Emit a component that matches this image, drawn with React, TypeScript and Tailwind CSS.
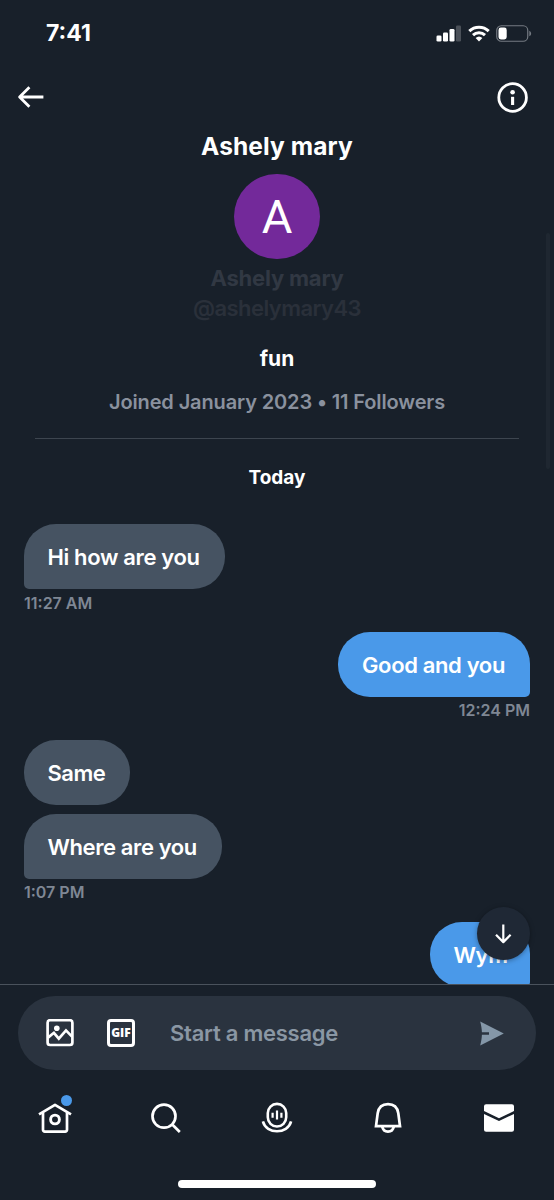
import React from "react";

function SignalIcon() {
  return (
    <svg width="26" height="17" viewBox="0 0 26 17" fill="#fff">
      <rect x="0.5" y="10.5" width="5" height="6" rx="1.3" />
      <rect x="7" y="7.5" width="5" height="9" rx="1.3" />
      <rect x="13.5" y="4" width="5" height="12.5" rx="1.3" />
      <rect x="20" y="0.5" width="5" height="16" rx="1.3" fill="#4a5058" />
    </svg>
  );
}

function WifiIcon() {
  return (
    <svg width="22" height="17" viewBox="0 0 22 17" fill="none" stroke="#fff" strokeWidth="3">
      <path d="M1.3 6.1a14 14 0 0 1 19.4 0" />
      <path d="M5 10.1a8.7 8.7 0 0 1 12 0" />
      <path d="M7.6 13L11 16.5L14.4 13a5 5 0 0 0-6.8 0Z" fill="#fff" stroke="none" />
    </svg>
  );
}

function BatteryIcon() {
  return (
    <svg width="36" height="17" viewBox="0 0 36 17" fill="none">
      <rect x="0.75" y="0.75" width="31" height="15.5" rx="4.6" stroke="#747a82" strokeWidth="1.2" />
      <path d="M33.3 5.7c2.4 1 2.4 4.6 0 5.6Z" fill="#747a82" />
      <rect x="2.5" y="2.6" width="8.2" height="11.8" rx="2.4" fill="#fff" />
    </svg>
  );
}

function BackIcon() {
  return (
    <svg width="27" height="22" viewBox="0 0 27 22" fill="none" stroke="#fff" strokeWidth="2.8">
      <path d="M2.4 11H26.4M12.4 1.2L2.6 11L12.4 20.8" strokeLinejoin="round" />
    </svg>
  );
}

function InfoIcon() {
  return (
    <svg width="32" height="32" viewBox="0 0 32 32" fill="none">
      <circle cx="15.6" cy="16.5" r="13.8" stroke="#fff" strokeWidth="2.8" />
      <circle cx="15.6" cy="11.3" r="2.3" fill="#fff" />
      <path d="M15.6 15.8v8.2" stroke="#fff" strokeWidth="3.1" />
    </svg>
  );
}

function PhotoIcon() {
  return (
    <svg width="28" height="28" viewBox="0 0 28 28" fill="none" stroke="#fff" strokeWidth="2.7">
      <rect x="1.6" y="1.2" width="24.8" height="24.8" rx="2.5" />
      <path d="M2 18.6L7.9 13.8L12.8 19.6L20 11.4L26 17.6" />
      <circle cx="10.8" cy="9.3" r="2.8" fill="#fff" stroke="none" />
    </svg>
  );
}

function GifIcon() {
  return (
    <div className="flex h-7 w-7 items-center justify-center rounded-[4px] border-[3px] border-white font-['Open_Sans','Inter',sans-serif] text-[12px] leading-none font-extrabold text-white">
      GIF
    </div>
  );
}

function SendIcon() {
  return (
    <svg width="24" height="25" viewBox="0 0 24 25">
      <path d="M0.2 0.4L23.8 12.5L0.2 24.6C1.4 19.8 1.8 16.8 1.9 13.7H9V11.3H1.9C1.8 8.2 1.4 5.2 0.2 0.4Z" fill="#8497a8" />
    </svg>
  );
}

function HomeIcon() {
  return (
    <svg width="34" height="32" viewBox="0 0 34 32" fill="none" stroke="#fff" strokeWidth="2.7">
      <path d="M1 12.3L17 2.8L33 12.3" strokeLinejoin="round" />
      <path d="M5 10.5V27.8a1.8 1.8 0 0 0 1.8 1.8H27.2a1.8 1.8 0 0 0 1.8-1.8V10.5" />
      <circle cx="17" cy="17.5" r="4.4" strokeWidth="2.9" />
    </svg>
  );
}

function SearchIcon() {
  return (
    <svg width="32" height="32" viewBox="0 0 32 32" fill="none" stroke="#fff" strokeWidth="2.7">
      <circle cx="14" cy="14.2" r="11.5" />
      <path d="M22 22.2L29.8 30" />
    </svg>
  );
}

function MicIcon() {
  return (
    <svg width="32" height="32" viewBox="0 0 32 32" fill="none" stroke="#fff" strokeWidth="2.6">
      <rect x="6.8" y="1.9" width="18.4" height="22.6" rx="9.2" />
      <path d="M1.9 19.4c3.3 13.2 24.9 13.2 28.2 0" />
      <path d="M11.6 10.7v5M16 8.6v9M20.4 10.7v5" strokeWidth="2.2" />
    </svg>
  );
}

function BellIcon() {
  return (
    <svg width="30" height="32" viewBox="0 0 30 32" fill="none" stroke="#fff" strokeWidth="2.7">
      <path d="M3 24.1L4.7 11.3C5.6 5.4 9.4 2.2 15 2.2S24.4 5.4 25.3 11.3L27 24.1Z" />
      <path d="M9.2 24.5C9.8 27.7 12 29.6 15 29.6S20.2 27.7 20.8 24.5" />
    </svg>
  );
}

function MailIcon() {
  return (
    <svg width="30" height="28" viewBox="0 0 30 28" fill="#fff">
      <path d="M0 7V2.3A2.1 2.1 0 0 1 2.1.2H27.9A2.1 2.1 0 0 1 30 2.3V7L15 14.2Z" />
      <path d="M0 9.9L15 17.1L30 9.9V25.7a2.1 2.1 0 0 1-2.1 2.1H2.1A2.1 2.1 0 0 1 0 25.7Z" />
    </svg>
  );
}

function ArrowDownIcon() {
  return (
    <svg width="17" height="20" viewBox="0 0 17 20" fill="none" stroke="#fff" strokeWidth="2.2">
      <path d="M8.3 0.5v17.6M1 10.8L8.3 18.1L15.6 10.8" strokeLinejoin="round" />
    </svg>
  );
}

export default function App() {
  return (
    <div className="flex h-[1200px] w-full flex-col overflow-hidden bg-[#18202a] font-['Inter','Liberation_Sans',sans-serif] whitespace-nowrap text-white">
      <div className="flex h-[66px] shrink-0 items-center justify-between pr-[22px] pl-[46px]">
        <span className="text-[23px] font-bold">7:41</span>
        <div className="flex items-center gap-[6px]">
          <SignalIcon />
          <WifiIcon />
          <BatteryIcon />
        </div>
      </div>

      <header className="flex h-[62px] shrink-0 items-center justify-between pr-[25px] pl-[17px]">
        <BackIcon />
        <InfoIcon />
      </header>

      <main className="relative flex h-[856px] shrink-0 flex-col overflow-hidden">
        <section className="flex flex-col items-center">
          <h1 className="h-[34px] text-[24.5px] leading-[36px] font-bold tracking-[0.1px]">Ashely mary</h1>
          <div className="mt-[12px] flex h-[85px] w-[86px] items-center justify-center rounded-full bg-[#73299a] font-['Roboto',sans-serif] text-[47px] leading-none">
            A
          </div>
          <div className="mt-[4px] h-[30px] text-[22px] leading-[30px] font-bold tracking-[-0.2px] text-[#313843]">Ashely mary</div>
          <div className="h-[30px] text-[22px] leading-[30px] font-semibold tracking-[-0.55px] text-[#2a303a]">@ashelymary43</div>
          <p className="mt-[21px] h-[30px] text-[21px] leading-[30px] font-bold">fun</p>
          <p className="mt-[13px] h-[30px] text-[20px] leading-[30px] font-semibold tracking-[-0.13px] text-[#8a919e]">
            Joined January 2023 • 11 Followers
          </p>
        </section>
        <hr className="mx-[35px] mt-[21px] border-t-[1.5px] border-[#3d454f]" />
        <p className="mt-[24px] h-[30px] text-center text-[19px] leading-[30px] font-bold">Today</p>

        <div className="mt-[31px] flex flex-col px-6">
          <div className="h-[65px] w-[201px] rounded-[32px] rounded-bl-[5px] bg-[#465362] pl-[23.5px] text-[22px] leading-[66px] font-semibold tracking-[-0.36px]">Hi how are you</div>
          <time className="mt-[4px] h-5 text-[16px] leading-5 font-semibold text-[#7f8794]">11:27 AM</time>

          <div className="mt-[19px] h-[65px] w-[192px] self-end rounded-[32px] rounded-br-[5px] bg-[#4a99e9] pl-6 text-[22px] leading-[66px] font-semibold tracking-[-0.36px]">Good and you</div>
          <time className="mt-[3px] h-5 self-end text-[16px] leading-5 font-semibold text-[#7f8794]">12:24 PM</time>

          <div className="mt-[20px] h-[65px] w-[106px] rounded-[32px] bg-[#465362] pl-[23.5px] text-[22px] leading-[66px] font-semibold tracking-[-0.5px]">Same</div>
          <div className="mt-[9px] h-[65px] w-[198px] rounded-[32px] rounded-bl-[5px] bg-[#465362] pl-[23.5px] text-[22px] leading-[66px] font-semibold tracking-[-0.4px]">Where are you</div>
          <time className="mt-[3px] h-5 text-[16px] leading-5 font-semibold text-[#7f8794]">1:07 PM</time>

          <div className="mt-[20px] h-[65px] w-[100px] self-end rounded-[32px] rounded-br-[5px] bg-[#4a99e9] pl-[23.5px] text-[22px] leading-[66px] font-semibold tracking-[-0.36px]">Wym</div>
        </div>

        <button className="absolute right-6 bottom-[24px] flex h-[53px] w-[53px] items-center justify-center rounded-full bg-[#1f2835] shadow-[0_1px_5px_rgba(0,0,0,0.35)]">
          <ArrowDownIcon />
        </button>
        <div className="absolute top-[105px] right-[4px] h-[236px] w-[4px] rounded-full bg-[#1f2731]" />
      </main>

      <footer className="flex grow flex-col border-t border-[#4a525c]">
        <div className="mx-[18px] mt-[11px] flex h-[74px] items-center rounded-full bg-[#2a333f] pr-[32px] pl-[28px]">
          <PhotoIcon />
          <div className="ml-[33px]"><GifIcon /></div>
          <span className="ml-[35px] text-[22px] font-semibold tracking-[-0.25px] text-[#8a97a4]">Start a message</span>
          <div className="ml-auto"><SendIcon /></div>
        </div>

        <nav className="mt-[16px] grid h-[64px] w-full grid-cols-5 place-items-center">
          <div className="relative">
            <HomeIcon />
            <span className="absolute -top-[7px] right-0 h-[11px] w-[11px] rounded-full bg-[#4a99e9]" />
          </div>
          <SearchIcon />
          <MicIcon />
          <BellIcon />
          <MailIcon />
        </nav>

        <div className="mt-auto mb-[12px] h-2 w-[198px] self-center rounded-full bg-white" />
      </footer>
    </div>
  );
}
